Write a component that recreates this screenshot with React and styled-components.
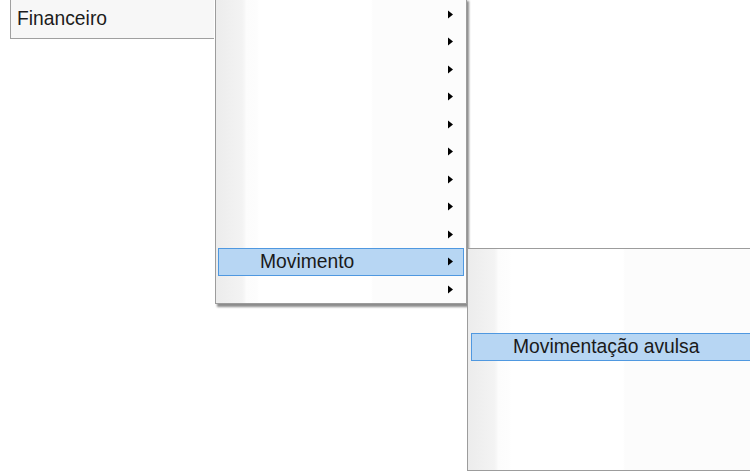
import React from 'react'
import styled, { createGlobalStyle } from 'styled-components';

const GlobalStyle = createGlobalStyle`
    html, body {
        margin: 0;
        padding: 0;
        background: #fff;
        overflow: hidden;
    }
    body {
        font-family: "Liberation Sans", Arial, sans-serif;
    }
`;

const firstMenu = ['', '', '', '', '', '', '', '', '', 'Movimento', ''];
const secondMenu = ['', '', '', 'Movimentação avulsa', '', '', '', ''];

const Arrow = () => (
    <svg width="5" height="9" viewBox="0 0 5 9">
        <polygon points="0,0.5 5,4.5 0,8.5" fill="#000" />
    </svg>
)

const App = () => {
  return (
    <Desktop>
      <GlobalStyle />
      <ParentItem>
        <Label>Financeiro</Label>
      </ParentItem>

      <Popup $left={215} $top={-2} $width={252} $height={306} $shadow>
        <ItemList>
          {firstMenu.map((text, i) => (
            <Item key={i} $active={text === 'Movimento'}>
              <Label>{text}</Label>
              <Arrow />
            </Item>
          ))}
        </ItemList>
      </Popup>

      <Popup $left={467} $top={248} $width={292} $height={223}>
        <ItemList>
          {secondMenu.map((text, i) => (
            <Item key={i} $active={text !== ''} $inset={3}>
              <Label>{text}</Label>
            </Item>
          ))}
        </ItemList>
      </Popup>
    </Desktop>
  )
}

export default App;

const Desktop = styled.div`
    position: relative;
    width: 750px;
    height: 471px;
    overflow: hidden;
    background: #fff;
`;

const ParentItem = styled.div`
    position: absolute;
    left: 10px;
    top: -1px;
    width: 204px;
    height: 40px;
    box-sizing: border-box;
    display: flex;
    align-items: center;
    padding: 0 0 1px 6px;
    background: #f7f7f7;
    border: 1px solid #a0a0a0;
    border-right: none;
    color: #1c1c1c;
`;

const Popup = styled.div`
    position: absolute;
    left: ${p => p.$left}px;
    top: ${p => p.$top}px;
    width: ${p => p.$width}px;
    height: ${p => p.$height}px;
    box-sizing: border-box;
    border: 1px solid #9c9c9c;
    background: linear-gradient(to right,
        #ececec 0px, #f3f3f3 26px, #f8f8f8 29px,
        #fcfcfc 30px, #fdfdfd 41px, #fff 43px, #fff 155px, #fcfcfc 157px);
    box-shadow: ${p => p.$shadow ? '2px 3px 2px rgba(0, 0, 0, 0.45)' : 'none'};
    z-index: ${p => p.$shadow ? 1 : 2};
`;

const ItemList = styled.div`
    display: flex;
    flex-direction: column;
    padding-top: 1.5px;
`;

const Item = styled.div`
    height: 27.5px;
    box-sizing: border-box;
    margin: 0 ${p => p.$inset ? 0 : 2}px 0 ${p => p.$inset || 2}px;
    display: flex;
    align-items: center;
    justify-content: space-between;
    padding: 0 10px 0 41px;
    border: 1px solid ${p => p.$active ? '#4f98e0' : 'transparent'};
    background: ${p => p.$active ? '#b7d6f3' : 'transparent'};
    color: #1a1a1a;
`;

const Label = styled.span`
    font-size: 19.3px;
    line-height: 1;
    white-space: nowrap;
`;
